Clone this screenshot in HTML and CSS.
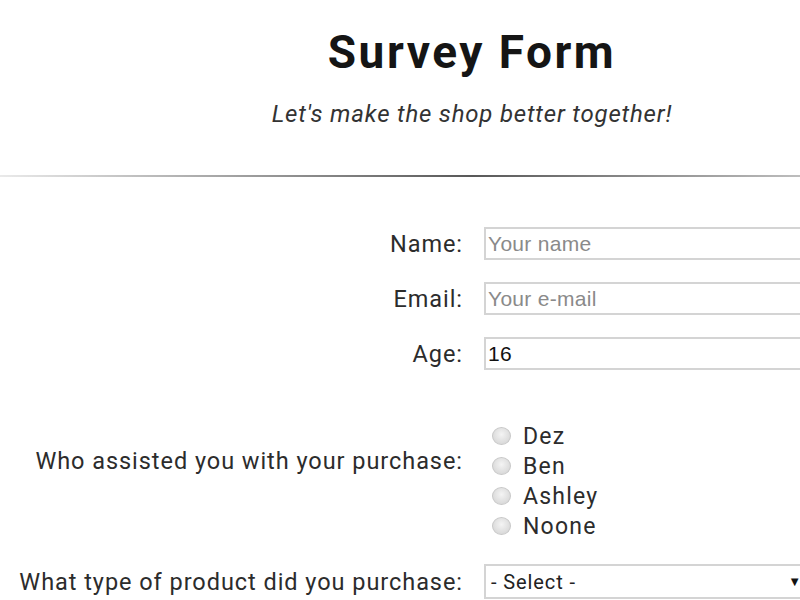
FILE: index.html
```html
<!DOCTYPE html>
<html lang="en">
<head>
<meta charset="utf-8">
<title>Survey Form</title>
<link rel="stylesheet" href="styles.css">
</head>
<body>
<div class="page">
  <header class="header">
    <h1 class="title">Survey Form</h1>
    <p class="subtitle">Let's make the shop better together!</p>
  </header>
  <hr class="divider">
  <form class="form">
    <div class="row">
      <label class="label" for="name">Name:</label>
      <input class="field" id="name" type="text" placeholder="Your name">
    </div>
    <div class="row">
      <label class="label" for="email">Email:</label>
      <input class="field" id="email" type="email" placeholder="Your e-mail">
    </div>
    <div class="row">
      <label class="label" for="age">Age:</label>
      <input class="field" id="age" type="number" value="16">
    </div>
    <div class="row row-radio">
      <span class="label label-radio">Who assisted you with your purchase:</span>
      <div class="radios">
        <label class="radio"><input type="radio" name="who"><span>Dez</span></label>
        <label class="radio"><input type="radio" name="who"><span>Ben</span></label>
        <label class="radio"><input type="radio" name="who"><span>Ashley</span></label>
        <label class="radio"><input type="radio" name="who"><span>Noone</span></label>
      </div>
    </div>
    <div class="row row-select">
      <label class="label" for="product">What type of product did you purchase:</label>
      <div class="select" id="product">
        <span class="select-text">- Select -</span>
        <span class="select-arrow">&#9660;</span>
      </div>
    </div>
  </form>
</div>
</body>
</html>
```
FILE: styles.css
```css
html, body {
  margin: 0;
  padding: 0;
  background: #fff;
  overflow: hidden;
}
body {
  font-family: Roboto, "Noto Sans", sans-serif;
  color: #222;
}
.page {
  width: 944px;
}
.header {
  text-align: center;
  padding-top: 25px;
}
.title {
  margin: 0;
  font-size: 46px;
  font-weight: 700;
  letter-spacing: 2.5px;
  line-height: 54px;
  color: #151515;
}
.subtitle {
  margin: 20px 0 0;
  font-size: 24px;
  font-style: italic;
  letter-spacing: 0.8px;
  line-height: 30px;
  color: #333;
}
.divider {
  margin: 46px 0 0;
  border: 0;
  height: 2px;
  background: linear-gradient(to right, rgba(80,80,80,0.12), rgba(70,70,70,0.9) 50%, rgba(80,80,80,0.12));
}
.form {
  padding-top: 50px;
}
.row {
  display: grid;
  grid-template-columns: 463px 1fr;
  column-gap: 21px;
  align-items: center;
  margin-bottom: 22px;
}
.label {
  text-align: right;
  font-size: 23.5px;
  letter-spacing: 0.95px;
  color: #2c2c2c;
}
.field {
  box-sizing: border-box;
  width: 440px;
  height: 33px;
  border: 2px solid #d4d4d4;
  padding: 0 2px;
  font-family: "Liberation Sans", Arial, sans-serif;
  font-size: 21px;
  letter-spacing: 0.3px;
  color: #111;
  outline: none;
}
.field::placeholder {
  color: #8a8a8a;
}
.field::-webkit-inner-spin-button,
.field::-webkit-outer-spin-button {
  -webkit-appearance: none;
  margin: 0;
}
.row-radio {
  margin-top: 45px;
  margin-bottom: 23px;
  align-items: start;
}
.label-radio {
  padding-top: 32px;
}
.radios {
  display: flex;
  flex-direction: column;
  padding-top: 6px;
}
.radio {
  display: flex;
  align-items: center;
  height: 30px;
  font-size: 23px;
  letter-spacing: 1.2px;
  color: #2c2c2c;
}
.radio input {
  -webkit-appearance: none;
  appearance: none;
  width: 19px;
  height: 18px;
  margin: 0 12px 0 8px;
  border-radius: 50%;
  border: 1px solid #c8c8c8;
  background: radial-gradient(circle at 50% 40%, #f4f4f4, #d0d0d0);
}
.select {
  box-sizing: border-box;
  width: 440px;
  height: 35px;
  border: 2px solid #d4d4d4;
  display: flex;
  align-items: center;
  justify-content: space-between;
  padding: 0 5px 0 5px;
  font-size: 20px;
  letter-spacing: 0.9px;
  color: #222;
}
.select-arrow {
  font-size: 13px;
  padding-right: 115px;
  color: #111;
}
```
